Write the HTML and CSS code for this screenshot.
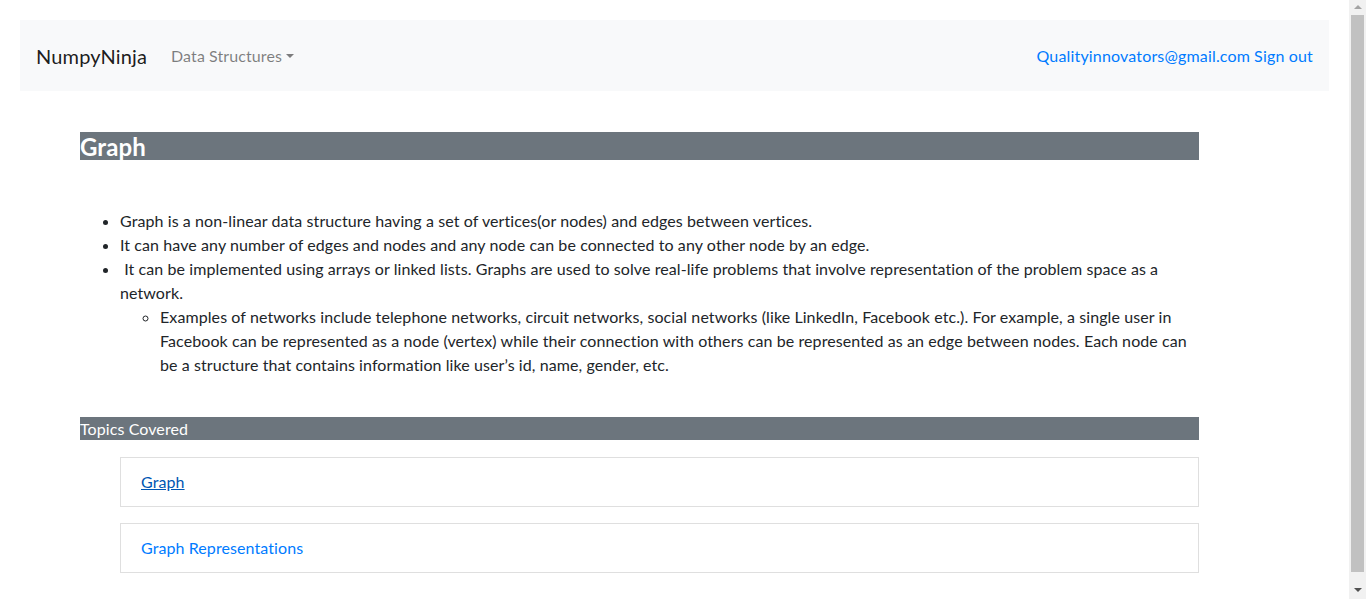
FILE: index.html
```html
<!DOCTYPE html>
<html lang="en">
<head>
<meta charset="utf-8">
<title>Graph</title>
<link rel="stylesheet" href="styles.css">
</head>
<body>
<nav class="navbar">
  <div class="nav-left">
    <a class="brand" href="#">NumpyNinja</a>
    <a class="nav-link dropdown-toggle" href="#">Data Structures</a>
  </div>
  <div class="nav-right">
    <a class="user-link" href="#">Qualityinnovators@gmail.com</a>
    <a class="user-link" href="#">Sign out</a>
  </div>
</nav>
<main class="content">
  <h2 class="title-bar">Graph</h2>
  <ul class="main-list">
    <li>Graph is a non-linear data structure having a set of vertices(or nodes) and edges between vertices.</li>
    <li>It can have any number of edges and nodes and any node can be connected to any other node by an edge.</li>
    <li>&nbsp;It can be implemented using arrays or linked lists. Graphs are used to solve real-life problems that involve representation of the problem space as a network.
      <ul class="sub-list">
        <li>Examples of networks include telephone networks, circuit networks, social networks (like LinkedIn, Facebook etc.). For example, a single user in Facebook can be represented as a node (vertex) while their connection with others can be represented as an edge between nodes. Each node can be a structure that contains information like user’s id, name, gender, etc.</li>
      </ul>
    </li>
  </ul>
  <div class="topics-bar">Topics Covered</div>
  <div class="topics">
    <div class="topic-card"><a class="topic-link active" href="#">Graph</a></div>
    <div class="topic-card"><a class="topic-link" href="#">Graph Representations</a></div>
  </div>
</main>
<div class="scrollbar" aria-hidden="true">
  <span class="sb-arrow sb-up"></span>
  <span class="sb-thumb"></span>
  <span class="sb-arrow sb-down"></span>
</div>
</body>
</html>
```
FILE: styles.css
```css
html, body {
  margin: 0;
  padding: 0;
}
body {
  font-family: "Lato", "Noto Sans", sans-serif;
  font-size: 16px;
  line-height: 24px;
  letter-spacing: 0.09px;
  color: #212529;
  background: #fff;
  padding: 20px 37px 0 20px;
  min-height: 705px;
  box-sizing: border-box;
}
a {
  text-decoration: none;
}
.navbar {
  height: 71px;
  background: #f8f9fa;
  display: flex;
  align-items: center;
  justify-content: space-between;
  padding: 0 16px;
}
.nav-left {
  display: flex;
  align-items: center;
}
.brand {
  font-size: 20px;
  color: rgba(0, 0, 0, 0.9);
  margin-right: 24px;
  line-height: 30px;
  letter-spacing: 0.15px;
}
.nav-link {
  color: rgba(0, 0, 0, 0.5);
  font-size: 16px;
}
.dropdown-toggle::after {
  content: "";
  display: inline-block;
  margin-left: 4px;
  vertical-align: 4px;
  border-top: 4.8px solid;
  border-left: 4.8px solid transparent;
  border-right: 4.8px solid transparent;
}
.nav-right {
  display: flex;
  gap: 4px;
}
.user-link {
  color: #007bff;
  letter-spacing: 0.17px;
}
.content {
  margin: 41px 130px 0 60px;
}
.title-bar {
  margin: 0;
  background: #6c757d;
  color: #fff;
  font-size: 24px;
  font-weight: 700;
  line-height: 30px;
  height: 28px;
}
.main-list {
  margin: 49px 0 0 0;
  padding-left: 40px;
}
.sub-list {
  margin: 0;
  padding-left: 40px;
  list-style-type: circle;
}
.topics-bar {
  margin-top: 40px;
  background: #6c757d;
  color: #fff;
  line-height: 24px;
  height: 23px;
}
.topics {
  margin: 17px 0 0 40px;
  display: flex;
  flex-direction: column;
  gap: 16px;
}
.topic-card {
  border: 1px solid #dfdfdf;
  height: 48px;
  display: flex;
  align-items: center;
  padding-left: 20px;
}
.topic-link {
  color: #007bff;
}
.topic-link.active {
  color: #0056b3;
  text-decoration: underline;
}
.scrollbar {
  position: fixed;
  top: 0;
  right: 0;
  width: 17px;
  height: 100vh;
  background: #f1f1f1;
  display: flex;
  flex-direction: column;
  align-items: center;
}
.sb-arrow {
  width: 0;
  height: 0;
  border-left: 4px solid transparent;
  border-right: 4px solid transparent;
}
.sb-up {
  margin-top: 5px;
  border-bottom: 4px solid #a3a3a3;
}
.sb-thumb {
  margin-top: 6px;
  width: 13px;
  height: 557px;
  background: #c1c1c1;
}
.sb-down {
  margin-top: 16px;
  border-top: 4px solid #505050;
}
```
